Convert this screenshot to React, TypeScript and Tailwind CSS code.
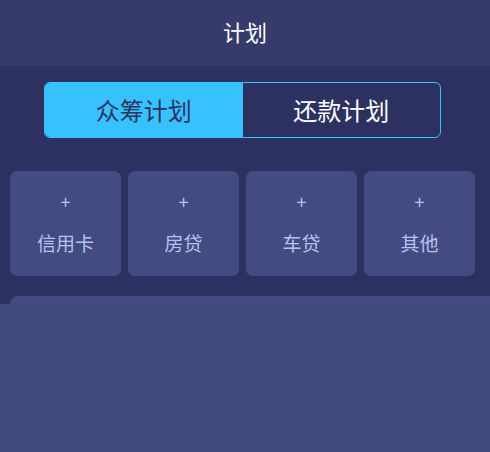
const tiles = ["信用卡", "房贷", "车贷", "其他"];

export default function App() {
	return (
		<div
			className="relative w-[490px] h-[452px] overflow-hidden bg-[#2d3161]"
			style={{ fontFamily: '"Noto Sans CJK SC", "Liberation Sans", sans-serif' }}
		>
			{/* Header */}
			<div className="h-[66px] bg-[#363b6b] flex items-center justify-center pb-[4px]">
				<span className="text-[22px] text-white">计划</span>
			</div>

			{/* Tabs */}
			<div className="pt-[16px] px-[44px] pr-[49px]">
				<div className="flex h-[56px] rounded-[6px] border-[1.5px] border-[#36c3fd] overflow-hidden">
					<button className="flex-1 bg-[#36c3fd] text-[#2d3161] text-[24px]">
						众筹计划
					</button>
					<button className="flex-1 text-white text-[24px]">还款计划</button>
				</div>
			</div>

			{/* Tiles */}
			<div className="mt-[33px] pl-[10px] pr-[15px] grid grid-cols-4 gap-[7px]">
				{tiles.map((t) => (
					<div
						key={t}
						className="h-[105px] rounded-[7px] bg-[#444b82] flex flex-col items-center text-[#b5c3ee]"
					>
						<span className="mt-[19px] text-[18px] leading-[22px]">+</span>
						<span className="mt-[18px] text-[19px] leading-[26px]">{t}</span>
					</div>
				))}
			</div>

			{/* Bottom card */}
			<div className="mt-[20px] ml-[10px] h-[200px] rounded-tl-[8px] bg-[#444b82]" />
			<div className="absolute left-0 right-0 top-[304px] bottom-0 bg-[#434a80]" />
		</div>
	);
}
